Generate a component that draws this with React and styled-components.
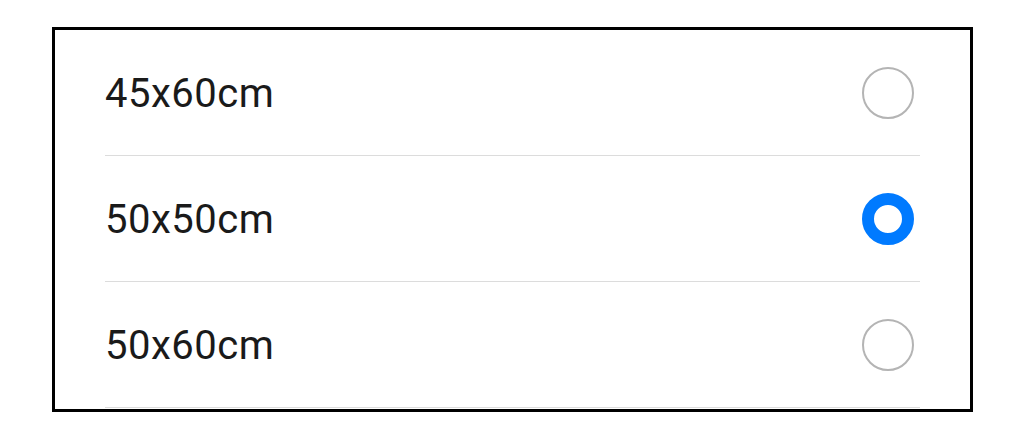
import React, { useState } from "react"
import styled, { createGlobalStyle } from "styled-components"

const GlobalStyle = createGlobalStyle`
  html, body {
    margin: 0;
    padding: 0;
    background: #ffffff;
  }
  body {
    font-family: Roboto, "Noto Sans", sans-serif;
  }
`

const Page = styled.div`
  width: 1024px;
  height: 436px;
  padding: 27px 51px 0 52px;
  box-sizing: border-box;
`

const Panel = styled.div`
  height: 385px;
  border: 3px solid #000000;
  box-sizing: border-box;
  background: #ffffff;
  padding: 0 50px;
  overflow: hidden;
`

const Option = styled.label`
  display: flex;
  align-items: center;
  justify-content: space-between;
  height: 126px;
  box-sizing: border-box;
  border-bottom: 1px solid #dcdcdc;
  cursor: pointer;
`

const OptionText = styled.span`
  font-size: 40px;
  color: #1a1a1a;
  letter-spacing: 0.5px;
  padding-top: 2px;
`

const Radio = styled.span`
  width: 52px;
  height: 52px;
  margin-right: 6px;
  border-radius: 50%;
  box-sizing: border-box;
  border: ${(p) => (p.checked ? "12.5px solid #007aff" : "2px solid #b4b4b4")};
  background: #ffffff;
`

const sizes = ["45x60cm", "50x50cm", "50x60cm"]

const App = () => {
  const [selected, setSelected] = useState("50x50cm")

  return (
    <Page>
      <GlobalStyle />
      <Panel>
        {sizes.map((size) => (
          <Option key={size} onClick={() => setSelected(size)}>
            <OptionText>{size}</OptionText>
            <Radio checked={selected === size} />
          </Option>
        ))}
      </Panel>
    </Page>
  )
}

export default App
